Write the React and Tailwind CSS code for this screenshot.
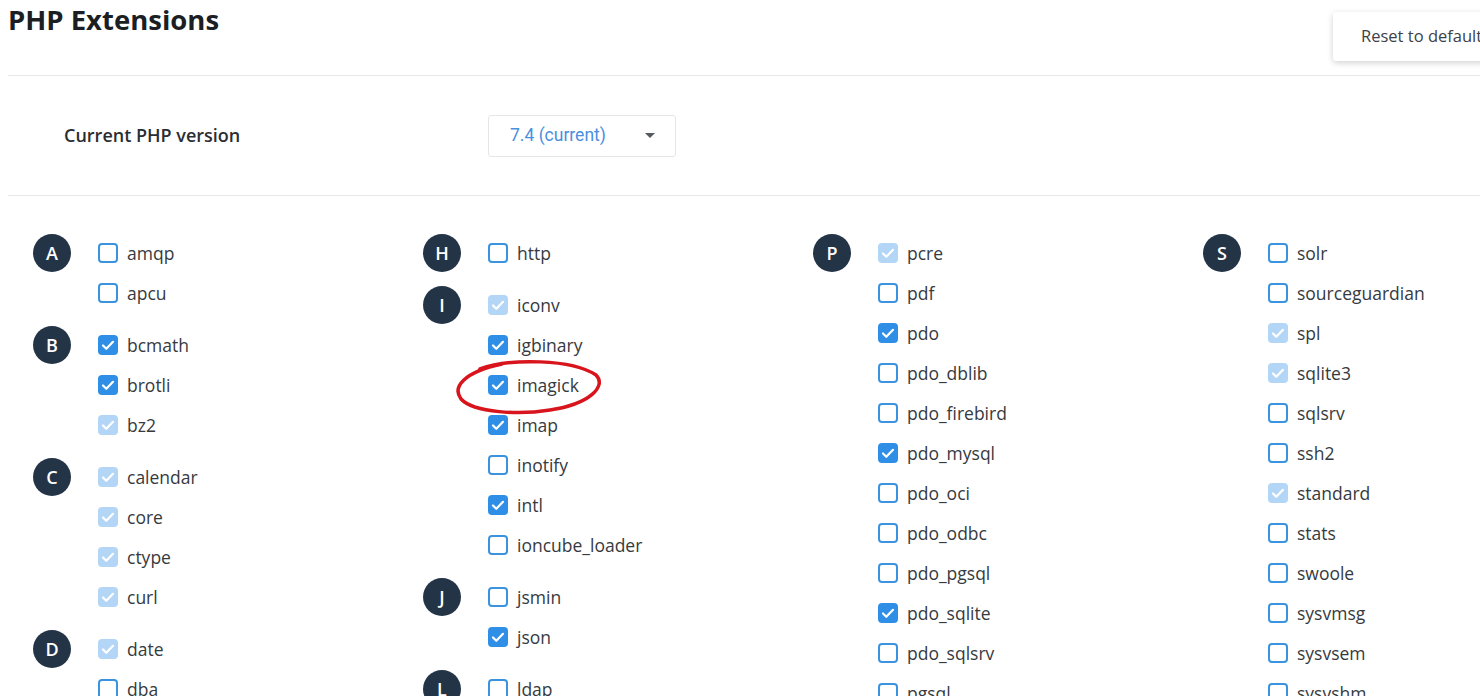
import React from "react"

// state: 0 = off, 1 = on, 2 = on + locked
const columns = [
  [
    { letter: "A", items: [["amqp", 0], ["apcu", 0]] },
    { letter: "B", items: [["bcmath", 1], ["brotli", 1], ["bz2", 2]] },
    { letter: "C", items: [["calendar", 2], ["core", 2], ["ctype", 2], ["curl", 2]] },
    { letter: "D", items: [["date", 2], ["dba", 0]] },
  ],
  [
    { letter: "H", items: [["http", 0]] },
    {
      letter: "I",
      items: [["iconv", 2], ["igbinary", 1], ["imagick", 1], ["imap", 1], ["inotify", 0], ["intl", 1], ["ioncube_loader", 0]],
    },
    { letter: "J", items: [["jsmin", 0], ["json", 1]] },
    { letter: "L", items: [["ldap", 0]] },
  ],
  [
    {
      letter: "P",
      items: [
        ["pcre", 2], ["pdf", 0], ["pdo", 1], ["pdo_dblib", 0], ["pdo_firebird", 0], ["pdo_mysql", 1],
        ["pdo_oci", 0], ["pdo_odbc", 0], ["pdo_pgsql", 0], ["pdo_sqlite", 1], ["pdo_sqlsrv", 0], ["pgsql", 0],
      ],
    },
  ],
  [
    {
      letter: "S",
      items: [
        ["solr", 0], ["sourceguardian", 0], ["spl", 2], ["sqlite3", 2], ["sqlsrv", 0], ["ssh2", 0],
        ["standard", 2], ["stats", 0], ["swoole", 0], ["sysvmsg", 0], ["sysvsem", 0], ["sysvshm", 0],
      ],
    },
  ],
]

const Check = () => (
  <svg viewBox="0 0 20 20" className="w-[20px] h-[20px]">
    <path d="M5 10.5l3.3 3.3L15 6.8" fill="none" stroke="white" strokeWidth="2.2" strokeLinecap="round" strokeLinejoin="round" />
  </svg>
)

const Box = ({ state }) => {
  if (state === 1) return <div className="w-[20px] h-[20px] rounded-[4px] bg-[#2f8fe6] shrink-0"><Check /></div>
  if (state === 2) return <div className="w-[20px] h-[20px] rounded-[4px] bg-[#b3d6f6] shrink-0"><Check /></div>
  return <div className="w-[20px] h-[20px] rounded-[4px] border-2 border-[#3b93e0] bg-white shrink-0" />
}

const Group = ({ letter, items }) => (
  <div className="flex">
    <div className="w-[38px] h-[38px] mt-px rounded-full bg-[#243447] text-white flex items-center justify-center text-[18px] font-semibold shrink-0">
      {letter}
    </div>
    <div className="ml-[27px] flex flex-col">
      {items.map(([name, state]) => (
        <div key={name} className="h-[40px] flex items-center gap-[9px]">
          <Box state={state} />
          <span className="text-[17.5px] text-[#363a40]">{name}</span>
        </div>
      ))}
    </div>
  </div>
)

export default function App() {
  return (
    <div className="w-full h-[696px] overflow-hidden bg-white relative" style={{ fontFamily: "'Open Sans', sans-serif" }}>
      <div className="w-[1600px]">
        <div className="h-[75px] flex items-start">
          <h1 className="pl-2 pt-[2px] text-[27.5px] leading-[36px] font-bold text-[#1b1f24]">PHP Extensions</h1>
          <button className="ml-auto mr-[82px] mt-[12px] h-[49px] px-7 bg-white rounded-[3px] shadow-[0_2px_6px_rgba(0,0,0,0.18)] text-[16.5px] text-[#3d4148]">
            Reset to defaults
          </button>
        </div>
        <div className="ml-2 h-px bg-[#e7e8ea]" />
        <div className="h-[119px] flex items-center">
          <div className="pl-[64px] w-[488px] shrink-0 text-[18px] font-semibold text-[#2a2e33]">Current PHP version</div>
          <div className="w-[188px] h-[42px] border border-[#e4e6e9] rounded-[3px] flex items-center pl-[21px] pr-[20px]" style={{ fontFamily: "Roboto, sans-serif" }}>
            <span className="text-[17.5px] text-[#4a8fe0]">7.4 (current)</span>
            <svg viewBox="0 0 10 5" className="ml-auto w-[10px] h-[5px]">
              <path d="M0 0h10L5 5z" fill="#555a60" />
            </svg>
          </div>
        </div>
        <div className="ml-2 h-px bg-[#e7e8ea]" />
        <div className="pl-[33px] pt-[37px] flex">
          {columns.map((groups, i) => (
            <div key={i} className="w-[390px] shrink-0 flex flex-col gap-[12px]">
              {groups.map((g) => (
                <Group key={g.letter} {...g} />
              ))}
            </div>
          ))}
        </div>
      </div>
      <svg className="absolute left-[450px] top-[355px] w-[160px] h-[65px]" viewBox="0 0 160 65">
        <path
          d="M30 14 C 60 3, 122 4, 146 20 C 157 31, 140 49, 100 55 C 70 60, 24 58, 11 44 C 2 32, 14 17, 52 9"
          fill="none"
          stroke="#d8141c"
          strokeWidth="3.5"
          strokeLinecap="round"
        />
      </svg>
    </div>
  )
}
